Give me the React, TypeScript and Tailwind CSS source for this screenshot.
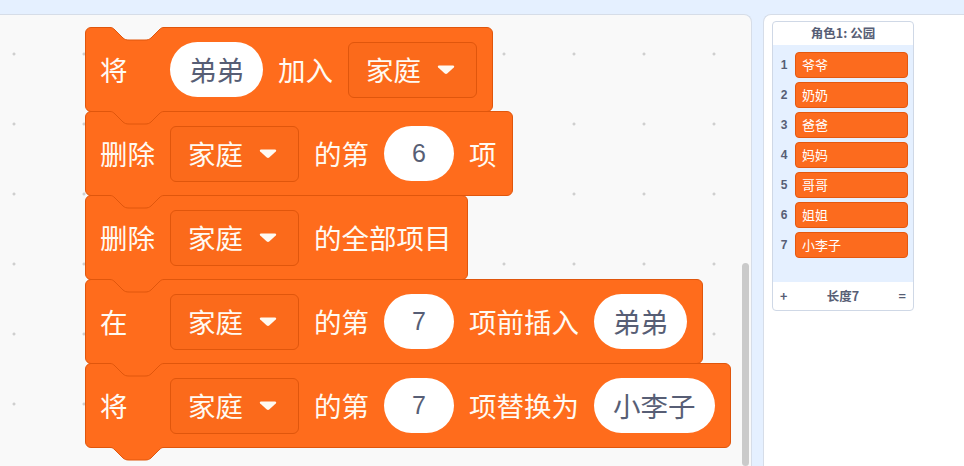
import { ReactNode } from "react";

const cjk = { fontFamily: '"Noto Sans CJK SC", "Noto Sans", sans-serif' };
const numFont = { fontFamily: '"Liberation Sans", "Noto Sans CJK SC", sans-serif' };

const NOTCH = "M0 0.5 C2 0.5 3 1 5 3 L13 11 C15 12.5 16 13 19 13 H35 C38 13 39 12.5 41 11 L49 3 C51 1 52 0.5 54 0.5";

function Notch({ cut }: { cut?: boolean }) {
    return (
        <svg
            className="absolute left-[24px] top-[-1px]"
            width="54"
            height="15"
            viewBox="0 0 54 15"
        >
            <path d={NOTCH + " V0 H0 Z"} fill={cut ? "#f9f9f9" : "#ff6c1c"} />
            {!cut && <path d="M0 0 H54 V1 H0 Z" fill="#ff6c1c" />}
            <path d={NOTCH} fill="none" stroke="#e0560c" strokeWidth="1" />
        </svg>
    );
}

function Bump() {
    return (
        <svg
            className="absolute left-[24px] top-full"
            width="54"
            height="15"
            viewBox="0 0 54 15"
        >
            <path d={NOTCH + " V0 H0 Z"} fill="#ff6c1c" />
            <path d={NOTCH} fill="none" stroke="#e0560c" strokeWidth="1" />
        </svg>
    );
}

function Block({
    children,
    first,
    last,
}: {
    children: ReactNode;
    first?: boolean;
    last?: boolean;
}) {
    return (
        <div
            className={`relative flex h-[85px] items-center gap-[15px] rounded-[6px] border border-[#e0560c] bg-[#ff6c1c] pl-[14px] pr-[15px] ${
                first ? "" : "-mt-px"
            }`}
        >
            <Notch cut={first} />
            {children}
            {last && <Bump />}
        </div>
    );
}

function Label({ text, min }: { text: string; min?: boolean }) {
    return (
        <span
            className={`text-[27.5px] leading-none text-[#fffaf2] whitespace-nowrap ${
                min ? "min-w-[55px]" : ""
            }`}
            style={cjk}
        >
            {text}
        </span>
    );
}

function Dropdown() {
    return (
        <div className="flex h-[56px] w-[129px] items-center rounded-[6px] border border-[#e0560c] bg-[#fb6a1b] pl-[17px]">
            <span className="text-[27.5px] leading-none text-[#fffaf2]" style={cjk}>
                家庭
            </span>
            <svg className="ml-[16px]" width="18" height="11" viewBox="0 0 18 11">
                <path
                    d="M2 1.5 H16 C17.2 1.5 17.6 2.6 16.8 3.4 L10.2 9.6 C9.5 10.2 8.5 10.2 7.8 9.6 L1.2 3.4 C0.4 2.6 0.8 1.5 2 1.5 Z"
                    fill="#fffaf2"
                />
            </svg>
        </div>
    );
}

function Pill({ text, num }: { text: string; num?: boolean }) {
    return (
        <div
            className={`flex h-[55px] items-center justify-center rounded-full bg-white text-[#575e75] ${
                num ? "w-[70px] text-[25px]" : "px-[19px] text-[27.5px]"
            }`}
            style={num ? numFont : cjk}
        >
            <span className="leading-none">{text}</span>
        </div>
    );
}

const items = ["爷爷", "奶奶", "爸爸", "妈妈", "哥哥", "姐姐", "小李子"];

function ListMonitor() {
    return (
        <div className="flex h-[290px] w-[142px] flex-col overflow-hidden rounded-[4px] border border-[#cfd8e6] bg-white">
            <div
                className="flex h-[23px] items-center justify-center text-[12.5px] font-bold text-[#575e75]"
                style={cjk}
            >
                角色1: 公园
            </div>
            <div className="flex flex-1 flex-col gap-[4px] bg-[#e5f0ff] pt-[7px]">
                {items.map((name, i) => (
                    <div key={name} className="flex items-center">
                        <span
                            className="w-[22px] text-center text-[12px] font-bold text-[#575e75]"
                            style={numFont}
                        >
                            {i + 1}
                        </span>
                        <div
                            className="flex h-[26px] w-[113px] items-center rounded-[4px] border border-[#e4580f] bg-[#fc6b1e] pl-[6px] text-[13px] text-white"
                            style={cjk}
                        >
                            {name}
                        </div>
                    </div>
                ))}
            </div>
            <div
                className="flex h-[28px] items-center justify-between px-[7px] text-[12.5px] font-bold text-[#575e75]"
                style={cjk}
            >
                <span>+</span>
                <span>长度7</span>
                <span>=</span>
            </div>
        </div>
    );
}

export default function App() {
    return (
        <div className="flex h-[466px] w-[964px] overflow-hidden bg-[#e5f0ff] pt-[14px]">
            {/* Code area */}
            <div className="relative h-full w-[752px] shrink-0 rounded-tr-[8px] border-t border-r border-[#d6dde8] bg-[#f9f9f9] bg-[radial-gradient(circle,#cfcfcf_1.2px,transparent_1.8px)] bg-[length:70px_70px] bg-[position:-21px_4px]">
                <div className="flex flex-col items-start pl-[85px] pt-[12px]">
                    <Block first>
                        <Label text="将" min />
                        <Pill text="弟弟" />
                        <Label text="加入" />
                        <Dropdown />
                    </Block>
                    <Block>
                        <Label text="删除" min />
                        <Dropdown />
                        <Label text="的第" />
                        <Pill text="6" num />
                        <Label text="项" />
                    </Block>
                    <Block>
                        <Label text="删除" min />
                        <Dropdown />
                        <Label text="的全部项目" />
                    </Block>
                    <Block>
                        <Label text="在" min />
                        <Dropdown />
                        <Label text="的第" />
                        <Pill text="7" num />
                        <Label text="项前插入" />
                        <Pill text="弟弟" />
                    </Block>
                    <Block last>
                        <Label text="将" min />
                        <Dropdown />
                        <Label text="的第" />
                        <Pill text="7" num />
                        <Label text="项替换为" />
                        <Pill text="小李子" />
                    </Block>
                </div>
                {/* scrollbar */}
                <div className="absolute right-[2px] top-[248px] bottom-0 w-[7px] rounded-full bg-[#cacaca]" />
            </div>

            {/* Stage area */}
            <div className="ml-[11px] h-full flex-1 rounded-tl-[8px] border-t border-l border-[#d6dde8] bg-white pl-[8px] pt-[6px]">
                <ListMonitor />
            </div>
        </div>
    );
}
